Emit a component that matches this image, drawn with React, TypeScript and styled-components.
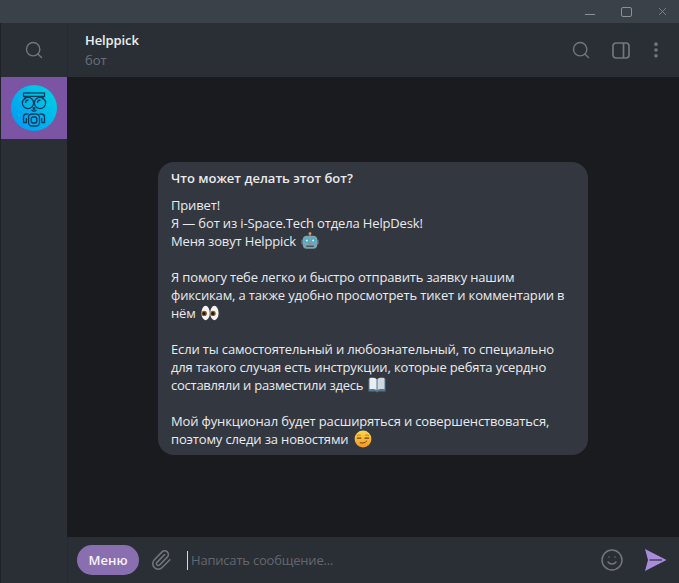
import React from 'react';
import styled, { createGlobalStyle } from 'styled-components';
import { Search, Paperclip, Smile, X, MoreVertical } from 'lucide-react';

const GlobalStyle = createGlobalStyle`
  html, body {
    margin: 0;
    padding: 0;
    height: 100%;
    background: #191b1f;
    font-family: "Open Sans", "Noto Sans", sans-serif;
    overflow: hidden;
  }
  * { box-sizing: border-box; }
  #root { height: 100%; }
`;

const Window = styled.div`
  width: 679px;
  height: 583px;
  display: flex;
  flex-direction: column;
`;

const TitleBar = styled.div`
  height: 23px;
  flex-shrink: 0;
  background: #3a4148;
  display: flex;
  justify-content: flex-end;
  align-items: center;
  gap: 2px;
  color: #8c9197;
`;

const WinButton = styled.div`
  width: 34px;
  height: 23px;
  display: flex;
  align-items: center;
  justify-content: center;
`;

const MinLine = styled.div`
  width: 10px;
  height: 1px;
  margin-top: 6px;
  background: #8c9197;
`;

const MaxBox = styled.div`
  width: 11px;
  height: 10px;
  border: 1.5px solid #8c9197;
  border-radius: 2px;
`;

const Body = styled.div`
  flex: 1;
  min-height: 0;
  display: flex;
`;

const Sidebar = styled.div`
  width: 67px;
  flex-shrink: 0;
  padding-left: 1px;
  background: #2a2f36;
  box-shadow: inset 1px 0 0 #1f2328;
  display: flex;
  flex-direction: column;
`;

const SideSearch = styled.div`
  height: 54px;
  display: flex;
  align-items: center;
  justify-content: center;
  color: #73767b;
`;

const ChatItem = styled.div`
  height: 62px;
  background: #7b54a3;
  display: flex;
  align-items: center;
  justify-content: center;
`;

const Avatar = styled.div`
  width: 46px;
  height: 46px;
  border-radius: 50%;
  background: linear-gradient(225deg, #00d4e0 0%, #00a2f2 80%);
  display: flex;
  align-items: center;
  justify-content: center;
`;

const Main = styled.div`
  flex: 1;
  min-width: 0;
  display: flex;
  flex-direction: column;
`;

const Header = styled.div`
  height: 54px;
  flex-shrink: 0;
  background: #2a2f36;
  box-shadow: inset 1px 0 0 #262a30;
  padding: 0 13px 0 18px;
  display: flex;
  align-items: center;
  justify-content: space-between;
`;

const Peer = styled.div`
  display: flex;
  flex-direction: column;
  gap: 2px;
`;

const PeerName = styled.div`
  font-size: 13px;
  line-height: 18px;
  font-weight: 600;
  letter-spacing: -0.1px;
  color: #eceff2;
`;

const PeerStatus = styled.div`
  font-size: 13px;
  line-height: 18px;
  color: #6b7076;
`;

const HeaderIcons = styled.div`
  display: flex;
  align-items: center;
  color: #73767b;
`;

const PanelIcon = styled.svg`
  width: 18px;
  height: 17px;
  margin: 0 16px 0 21px;
`;

const Messages = styled.div`
  flex: 1;
  min-height: 0;
  background: #191b1f;
  display: flex;
  align-items: center;
  justify-content: center;
  padding-top: 3px;
`;

const Bubble = styled.div`
  width: 430px;
  padding: 7px 13px;
  border-radius: 16px;
  background: #33373f;
  color: #e9ebee;
  font-size: 13px;
  line-height: 18px;
`;

const BubbleTitle = styled.div`
  font-weight: 600;
  margin-bottom: 9px;
`;

const Para = styled.p`
  margin: 0 0 18px;
  letter-spacing: -0.15px;
  &:last-child { margin-bottom: 0; }
`;

const Tight = styled.span`
  letter-spacing: -0.25px;
`;

const Emoji = styled.svg`
  width: 18px;
  height: 18px;
  vertical-align: -4px;
  margin-left: 2px;
`;

const Composer = styled.div`
  height: 46px;
  flex-shrink: 0;
  background: #2a2f36;
  box-shadow: inset 1px 0 0 #262a30;
  padding: 0 12px 0 10px;
  display: flex;
  align-items: center;
`;

const MenuButton = styled.div`
  width: 62px;
  height: 30px;
  border-radius: 15px;
  background: #8a6fb0;
  color: #f5f3fa;
  font-size: 13px;
  font-weight: 600;
  display: flex;
  align-items: center;
  justify-content: center;
`;

const Attach = styled.div`
  width: 48px;
  padding-right: 4px;
  display: flex;
  justify-content: center;
  color: #73767b;
`;

const Input = styled.div`
  flex: 1;
  height: 19px;
  border-left: 1px solid #d5d7da;
  padding-left: 3px;
  font-size: 13px;
  line-height: 18px;
  letter-spacing: -0.2px;
  color: #63676d;
`;

const ComposerIcon = styled.div`
  display: flex;
  margin-right: 20px;
  color: #73767b;
`;

const SendIcon = styled.svg`
  width: 23px;
  height: 22px;
  display: block;
`;

const RobotMark = () => (
  <svg width="28" height="40" viewBox="0 0 28 40" fill="none" stroke="#07395c" strokeWidth="1.3">
    <rect x="3.5" y="5" width="21" height="3.4" />
    <path d="M5 8.4v3M23 8.4v3" />
    <circle cx="8" cy="15" r="5.6" />
    <circle cx="20" cy="15" r="5.6" />
    <path d="M5.5 15c0-2 1.2-3 3-3M17.5 15c0-2 1.2-3 3-3" />
    <path d="M11.5 22c1.6 1.4 3.4 1.4 5 0" />
    <circle cx="14" cy="20.5" r="0.8" />
    <rect x="8.5" y="26" width="11" height="12" rx="3.5" />
    <rect x="11.2" y="29" width="5.6" height="6" rx="2" />
    <path d="M8.5 26H6.5c-2 0-3 1.6-3 3.4v5.1h2.8V30M19.5 26h2c2 0 3 1.6 3 3.4v5.1h-2.8V30" />
  </svg>
);

const RobotEmoji = () => (
  <Emoji viewBox="0 0 18 18">
    <circle cx="9" cy="1.6" r="1.4" fill="#e8a24c" />
    <rect x="8.3" y="2.5" width="1.4" height="2" fill="#7d96a2" />
    <rect x="0.3" y="7.5" width="2.4" height="5" rx="1" fill="#5c7684" />
    <rect x="15.3" y="7.5" width="2.4" height="5" rx="1" fill="#5c7684" />
    <rect x="1.8" y="3.8" width="14.4" height="13" rx="4" fill="#7ea3ae" />
    <circle cx="5.8" cy="8.6" r="2.4" fill="#2fb4d8" />
    <circle cx="12.2" cy="8.6" r="2.4" fill="#2fb4d8" />
    <circle cx="5.8" cy="8.6" r="1" fill="#dff6fb" />
    <circle cx="12.2" cy="8.6" r="1" fill="#dff6fb" />
    <rect x="7.8" y="10.2" width="2.4" height="2" rx="0.8" fill="#e2675c" />
    <rect x="5" y="13.4" width="8" height="1.6" rx="0.8" fill="#3f5968" />
  </Emoji>
);

const EyesEmoji = () => (
  <Emoji viewBox="0 0 18 18">
    <ellipse cx="4.6" cy="9" rx="4.2" ry="7.2" fill="#f4f4f2" />
    <ellipse cx="13.4" cy="9" rx="4.2" ry="7.2" fill="#f4f4f2" />
    <circle cx="3.2" cy="9.4" r="2.7" fill="#8a5a20" />
    <circle cx="12" cy="9.4" r="2.7" fill="#8a5a20" />
    <circle cx="3" cy="9.4" r="1.5" fill="#1d1610" />
    <circle cx="11.8" cy="9.4" r="1.5" fill="#1d1610" />
  </Emoji>
);

const BookEmoji = () => (
  <Emoji viewBox="0 0 18 18">
    <path d="M0.5 3h8l.5 1 .5-1h8v12.5H10.5l-1.5 1-1.5-1H.5z" fill="#56758f" />
    <path d="M1.5 2c3-.6 6-.3 7 1v11c-1.5-1-4-1.2-7-.8z" fill="#e8edf0" />
    <path d="M16.5 2c-3-.6-6-.3-7 1v11c1.5-1 4-1.2 7-.8z" fill="#cfd8de" />
  </Emoji>
);

const SmirkEmoji = () => (
  <Emoji viewBox="0 0 18 18">
    <defs>
      <linearGradient id="face" x1="0" y1="0" x2="0" y2="1">
        <stop offset="0" stopColor="#fbd650" />
        <stop offset="1" stopColor="#f5991f" />
      </linearGradient>
    </defs>
    <circle cx="9" cy="9" r="8.4" fill="url(#face)" />
    <path d="M3.2 5.6c1-.7 2.2-.8 3.2-.4M11.4 5.2c1-.4 2.2-.3 3.2.4" stroke="#a8641a" strokeWidth="0.8" fill="none" strokeLinecap="round" />
    <path d="M3.4 8.2h3.4M11 8.2h3.6" stroke="#70400f" strokeWidth="1.2" strokeLinecap="round" />
    <path d="M6.2 12.8c2.4 .7 4.8 .3 6.6-1.8" stroke="#70400f" strokeWidth="1" fill="none" strokeLinecap="round" />
  </Emoji>
);

const App = () => {
  return (
    <Window>
      <GlobalStyle />
      <TitleBar>
        <WinButton><MinLine /></WinButton>
        <WinButton><MaxBox /></WinButton>
        <WinButton><X size={13} strokeWidth={1.4} /></WinButton>
      </TitleBar>
      <Body>
        <Sidebar>
          <SideSearch><Search size={20} strokeWidth={1.7} /></SideSearch>
          <ChatItem>
            <Avatar><RobotMark /></Avatar>
          </ChatItem>
        </Sidebar>
        <Main>
          <Header>
            <Peer>
              <PeerName>Helppick</PeerName>
              <PeerStatus>бот</PeerStatus>
            </Peer>
            <HeaderIcons>
              <Search size={20} strokeWidth={1.7} />
              <PanelIcon viewBox="0 0 18 17" fill="none" stroke="currentColor" strokeWidth="1.7">
                <rect x="1" y="1" width="16" height="15" rx="3" />
                <path d="M11.5 1v15" />
              </PanelIcon>
              <MoreVertical size={20} strokeWidth={2.4} />
            </HeaderIcons>
          </Header>
          <Messages>
            <Bubble>
              <BubbleTitle>Что может делать этот бот?</BubbleTitle>
              <Para>
                Привет!<br />
                Я — бот из i-Space.Tech отдела HelpDesk!<br />
                Меня зовут Helppick <RobotEmoji />
              </Para>
              <Para>
                Я помогу тебе легко и быстро отправить заявку нашим<br />
                фиксикам, а также удобно просмотреть тикет и комментарии в<br />
                нём <EyesEmoji />
              </Para>
              <Para>
                Если ты самостоятельный и любознательный, то специально<br />
                для такого случая есть инструкции, которые ребята усердно<br />
                <Tight>составляли и разместили здесь</Tight> <BookEmoji />
              </Para>
              <Para>
                Мой функционал будет расширяться и совершенствоваться,<br />
                поэтому следи за новостями <SmirkEmoji />
              </Para>
            </Bubble>
          </Messages>
          <Composer>
            <MenuButton>Меню</MenuButton>
            <Attach><Paperclip size={22} strokeWidth={1.7} /></Attach>
            <Input>Написать сообщение...</Input>
            <ComposerIcon><Smile size={24} strokeWidth={1.5} /></ComposerIcon>
            <SendIcon viewBox="0 0 23 22">
              <path d="M1 0l21.5 11L1 22l3-11z" fill="#a98bdc" />
              <path d="M5.5 11H18" stroke="#2a2f36" strokeWidth="1.2" />
            </SendIcon>
          </Composer>
        </Main>
      </Body>
    </Window>
  );
};

export default App;
